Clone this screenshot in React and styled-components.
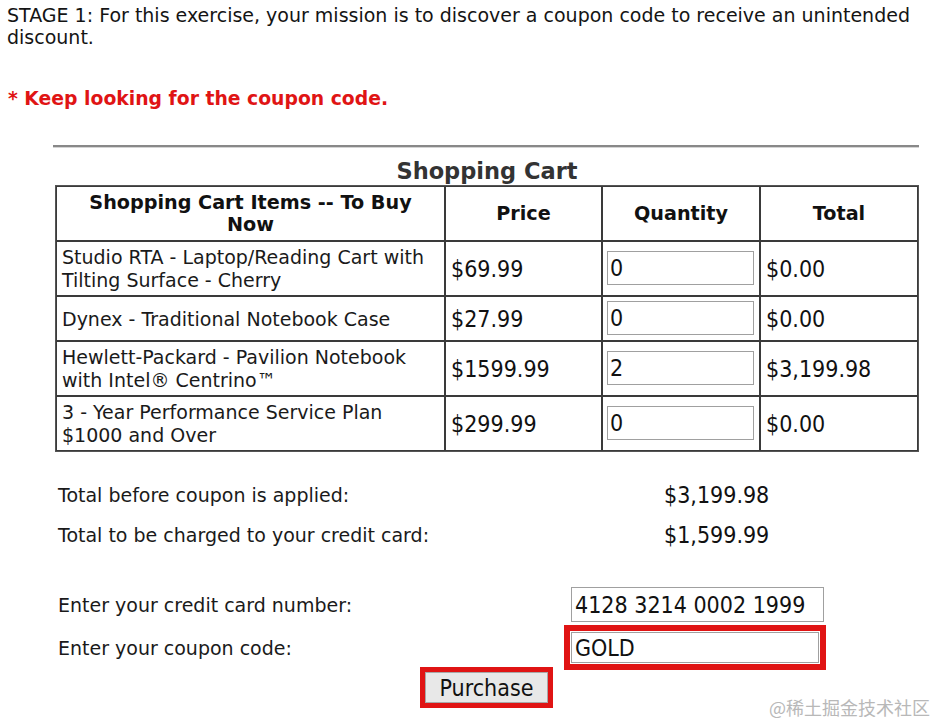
import React from "react";
import styled, { createGlobalStyle } from "styled-components";

const GlobalStyle = createGlobalStyle`
  body {
    margin: 0;
    background: #ffffff;
    font-family: "DejaVu Sans", Verdana, sans-serif;
    color: #111;
  }
`;

const items = [
  { name: ["Studio RTA - Laptop/Reading Cart with", "Tilting Surface - Cherry"], price: "$69.99", qty: "0", total: "$0.00" },
  { name: ["Dynex - Traditional Notebook Case"], price: "$27.99", qty: "0", total: "$0.00" },
  { name: ["Hewlett-Packard - Pavilion Notebook", "with Intel® Centrino™"], price: "$1599.99", qty: "2", total: "$3,199.98" },
  { name: ["3 - Year Performance Service Plan", "$1000 and Over"], price: "$299.99", qty: "0", total: "$0.00" },
];

const App = () => {
  return (
    <Page>
      <GlobalStyle />
      <Intro>
        STAGE 1: For this exercise, your mission is to discover a coupon code to receive an unintended
        discount.
      </Intro>
      <Warning>* Keep looking for the coupon code.</Warning>

      <Content>
        <Rule />
        <CartTable>
          <caption>Shopping Cart</caption>
          <colgroup>
            <col style={{ width: 389 }} />
            <col style={{ width: 157 }} />
            <col style={{ width: 158 }} />
            <col style={{ width: 158 }} />
          </colgroup>
          <thead>
            <tr>
              <Th>
                Shopping Cart Items -- To Buy
                <br />
                Now
              </Th>
              <Th>Price</Th>
              <Th>Quantity</Th>
              <Th>Total</Th>
            </tr>
          </thead>
          <tbody>
            {items.map((item) => (
              <tr key={item.price}>
                <ItemCell>
                  {item.name.map((line, i) => (
                    <span key={line}>
                      {i > 0 && <br />}
                      {line}
                    </span>
                  ))}
                </ItemCell>
                <MoneyCell>{item.price}</MoneyCell>
                <QtyCell>
                  <QtyInput defaultValue={item.qty} />
                </QtyCell>
                <MoneyCell>{item.total}</MoneyCell>
              </tr>
            ))}
          </tbody>
        </CartTable>

        <Summary>
          <Label>Total before coupon is applied:</Label>
          <Amount>$3,199.98</Amount>
          <Label>Total to be charged to your credit card:</Label>
          <Amount>$1,599.99</Amount>
        </Summary>

        <Payment>
          <Label>Enter your credit card number:</Label>
          <FieldBox>
            <TextInput $w={253} $h={35} defaultValue="4128 3214 0002 1999" />
          </FieldBox>
          <Label>Enter your coupon code:</Label>
          <FieldBox $marked>
            <TextInput $w={248} $h={31} defaultValue="GOLD" />
          </FieldBox>
        </Payment>

        <ButtonRow>
          <Marked>
            <PurchaseButton>Purchase</PurchaseButton>
          </Marked>
        </ButtonRow>
      </Content>
      <Watermark>@稀土掘金技术社区</Watermark>
    </Page>
  );
};

const Page = styled.div`
  position: relative;
  width: 935px;
  height: 725px;
  overflow: hidden;
  padding: 4px 0 0 7px;
  box-sizing: border-box;
`;

const Intro = styled.p`
  margin: 0;
  width: 926px;
  font-size: 19px;
  line-height: 22px;
  color: #141414;
`;

const Warning = styled.p`
  margin: 40px 0 0 1px;
  font-size: 18.8px;
  line-height: 22px;
  font-weight: bold;
  color: #e01414;
`;

const Content = styled.div`
  margin: 0 0 0 46px;
  width: 866px;
`;

const Rule = styled.hr`
  margin: 35px 0 0 0;
  border: none;
  border-top: 2px solid #888;
  border-bottom: 1px solid #d4d4d4;
  height: 0;
`;

const CartTable = styled.table`
  margin: 9px 0 0 2px;
  width: 862px;
  border-collapse: separate;
  border-spacing: 0;
  border: 1px solid #555;
  table-layout: fixed;

  caption {
    font-size: 22.5px;
    font-weight: bold;
    color: #333;
    line-height: 28px;
  }
`;

const Th = styled.th`
  border: 1px solid #3a3a3a;
  padding: 5px 4px 4px;
  font-size: 19.2px;
  line-height: 22px;
  font-weight: bold;
  text-align: center;
  color: #111;
`;

const ItemCell = styled.td`
  border: 1px solid #3a3a3a;
  padding: 4px 5px 3px;
  font-size: 19px;
  line-height: 23px;
  white-space: nowrap;
  vertical-align: middle;
  color: #1a1a1a;
`;

const MoneyCell = styled.td`
  border: 1px solid #3a3a3a;
  padding: 0 5px;
  font-family: "DejaVu Sans Condensed", "Noto Sans", sans-serif;
  font-size: 23px;
  vertical-align: middle;
  color: #111;
`;

const QtyCell = styled.td`
  border: 1px solid #3a3a3a;
  padding: 4px 3px 5px 4px;
  vertical-align: middle;
`;

const QtyInput = styled.input`
  display: block;
  box-sizing: border-box;
  width: 147px;
  height: 34px;
  margin: 0;
  padding: 0 2px;
  border: 1px solid #a0a0a0;
  font-family: "DejaVu Sans Condensed", "Noto Sans", sans-serif;
  font-size: 23px;
  color: #111;
`;

const Summary = styled.div`
  display: grid;
  grid-template-columns: 606px auto;
  row-gap: 18px;
  margin: 32px 0 0 5px;
  align-items: center;
`;

const Label = styled.div`
  font-size: 19px;
  line-height: 22px;
  color: #1a1a1a;
`;

const Amount = styled.div`
  font-family: "DejaVu Sans Condensed", "Noto Sans", sans-serif;
  font-size: 23px;
  line-height: 22px;
  color: #111;
`;

const Payment = styled.div`
  display: grid;
  grid-template-columns: 513px auto;
  row-gap: 3px;
  margin: 41px 0 0 5px;
  align-items: center;
`;

const FieldBox = styled.div`
  justify-self: start;
  margin-left: ${(p) => (p.$marked ? "-7px" : "0")};
  padding: ${(p) => (p.$marked ? "1px" : "0")};
  border: ${(p) => (p.$marked ? "6px solid #e01414" : "none")};
`;

const TextInput = styled.input`
  display: block;
  box-sizing: border-box;
  width: ${(p) => p.$w}px;
  height: ${(p) => p.$h}px;
  margin: 0;
  padding: 0 3px;
  border: 1px solid #a0a0a0;
  font-family: "DejaVu Sans Condensed", "Noto Sans", sans-serif;
  font-size: 23px;
  color: #111;
`;

const ButtonRow = styled.div`
  display: flex;
  justify-content: center;
  margin: -3px 0 0 1px;
`;

const Marked = styled.div`
  border: 5px solid #e01414;
`;

const PurchaseButton = styled.button`
  display: block;
  width: 123px;
  height: 31px;
  padding: 0;
  border: 1px solid #a8a8a8;
  border-radius: 0;
  background: #e8e8e8;
  font-family: "DejaVu Sans Condensed", "Noto Sans", sans-serif;
  font-size: 23px;
  color: #111;
`;

const Watermark = styled.div`
  position: absolute;
  right: 5px;
  bottom: 5px;
  font-family: "Noto Sans CJK SC", sans-serif;
  font-size: 18px;
  color: #b8b8b8;
`;

export default App;
